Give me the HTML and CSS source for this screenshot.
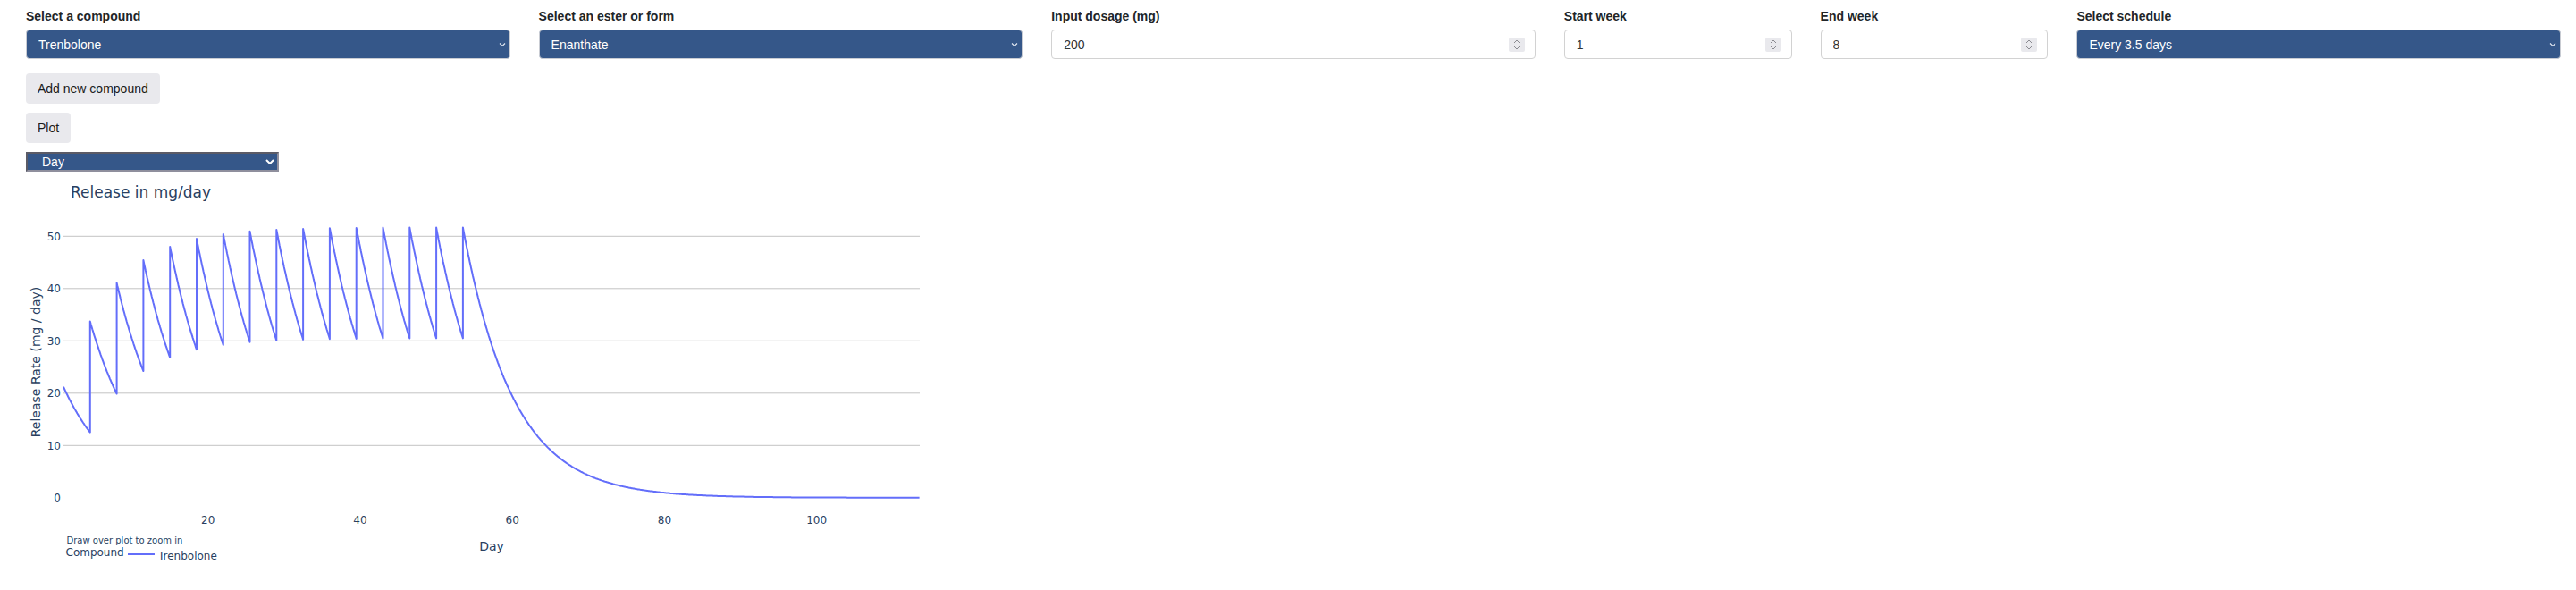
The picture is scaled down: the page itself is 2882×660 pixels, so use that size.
FILE: index.html
```html
<!DOCTYPE html>
<html lang="en">
<head>
  <meta charset="UTF-8">
  <title>Release Calculator</title>
  <link rel="stylesheet" href="styles.css">
</head>
<body>
  <div class="controls">
    <div class="field wide">
      <label for="compound">Select a compound</label>
      <div class="select-wrap">
        <select id="compound" class="dropdown"><option>Trenbolone</option></select>
        <svg class="chevron" width="8" height="5" viewBox="0 0 8 5"><path d="M1 1l3 3 3-3"/></svg>
      </div>
    </div>
    <div class="field wide">
      <label for="ester">Select an ester or form</label>
      <div class="select-wrap">
        <select id="ester" class="dropdown"><option>Enanthate</option></select>
        <svg class="chevron" width="8" height="5" viewBox="0 0 8 5"><path d="M1 1l3 3 3-3"/></svg>
      </div>
    </div>
    <div class="field wide">
      <label for="dosage">Input dosage (mg)</label>
      <div class="input-wrap">
        <input id="dosage" class="number" type="number" value="200">
        <span class="spinner">
          <svg width="8" height="5" viewBox="0 0 8 5"><path d="M1 4l3-3 3 3"/></svg>
          <svg width="8" height="5" viewBox="0 0 8 5"><path d="M1 1l3 3 3-3"/></svg>
        </span>
      </div>
    </div>
    <div class="field">
      <label for="start">Start week</label>
      <div class="input-wrap">
        <input id="start" class="number" type="number" value="1">
        <span class="spinner">
          <svg width="8" height="5" viewBox="0 0 8 5"><path d="M1 4l3-3 3 3"/></svg>
          <svg width="8" height="5" viewBox="0 0 8 5"><path d="M1 1l3 3 3-3"/></svg>
        </span>
      </div>
    </div>
    <div class="field">
      <label for="end">End week</label>
      <div class="input-wrap">
        <input id="end" class="number" type="number" value="8">
        <span class="spinner">
          <svg width="8" height="5" viewBox="0 0 8 5"><path d="M1 4l3-3 3 3"/></svg>
          <svg width="8" height="5" viewBox="0 0 8 5"><path d="M1 1l3 3 3-3"/></svg>
        </span>
      </div>
    </div>
    <div class="field wide">
      <label for="schedule">Select schedule</label>
      <div class="select-wrap">
        <select id="schedule" class="dropdown"><option>Every 3.5 days</option></select>
        <svg class="chevron" width="8" height="5" viewBox="0 0 8 5"><path d="M1 1l3 3 3-3"/></svg>
      </div>
    </div>
  </div>

  <div class="actions">
    <button type="button">Add new compound</button>
    <button type="button">Plot</button>
    <div class="select-wrap unit-wrap">
      <select class="unit"><option>Day</option></select>
      <svg class="chevron bold" width="10" height="6" viewBox="0 0 10 6"><path d="M1 1l4 4 4-4"/></svg>
    </div>
  </div>

  <svg class="chart" width="1100" height="468" viewBox="0 192 1100 468">
    <text class="title" x="79" y="221">Release in mg/day</text>
    <g class="grid">
      <line x1="71" x2="1029" y1="498.3" y2="498.3"/>
      <line x1="71" x2="1029" y1="439.8" y2="439.8"/>
      <line x1="71" x2="1029" y1="381.3" y2="381.3"/>
      <line x1="71" x2="1029" y1="322.8" y2="322.8"/>
      <line x1="71" x2="1029" y1="264.3" y2="264.3"/>
    </g>
    <g class="ytick">
      <text x="68" y="561.2">0</text>
      <text x="68" y="502.7">10</text>
      <text x="68" y="444.2">20</text>
      <text x="68" y="385.7">30</text>
      <text x="68" y="327.2">40</text>
      <text x="68" y="268.7">50</text>
    </g>
    <g class="xtick">
      <text x="232.7" y="586">20</text>
      <text x="402.9" y="586">40</text>
      <text x="573.2" y="586">60</text>
      <text x="743.4" y="586">80</text>
      <text x="913.6" y="586">100</text>
    </g>
    <path id="release" class="trace" d=""/>
    <text class="axis-title" x="550" y="615.5" text-anchor="middle">Day</text>
    <text class="axis-title" transform="translate(45 405) rotate(-90)" text-anchor="middle">Release Rate (mg / day)</text>
    <text class="hint" x="74.5" y="607.5">Draw over plot to zoom in</text>
    <text class="legend" x="73.5" y="622">Compound</text>
    <line class="trace" x1="143" x2="173" y1="620" y2="620"/>
    <text class="legend" x="177" y="625.5">Trenbolone</text>
  </svg>

  <script>
    // depot release: each dose adds A mg/day and decays exponentially
    const A = 21.2;
    const k = Math.log(1 / 0.59) / 3.5;
    const doses = [];
    for (let d = 1; d <= 56; d += 3.5) doses.push(d);

    function rate(t, includeAt) {
      let sum = 0;
      doses.forEach(ti => {
        if (ti < t || (includeAt && ti === t)) sum += A * Math.exp(-k * (t - ti));
      });
      return sum;
    }

    const px = t => 71 + (t - 1) * 8.512;
    const py = v => 556.8 - 5.85 * v;

    const pts = [];
    for (let i = 0; i <= 1125; i++) {
      const t = Math.round((1 + i * 0.1) * 10) / 10;
      if (doses.includes(t) && t > 1) pts.push([px(t), py(rate(t, false))]);
      pts.push([px(t), py(rate(t, true))]);
    }
    document.getElementById("release").setAttribute("d",
      "M" + pts.map(p => p[0].toFixed(1) + "," + p[1].toFixed(1)).join("L"));
  </script>
</body>
</html>
```

FILE: styles.css
```css
body {
  margin: 0;
  font-family: "Liberation Sans", Arial, sans-serif;
  font-size: 14px;
  color: #212529;
  background: #fff;
}

.controls {
  display: grid;
  grid-template-columns: repeat(10, 1fr);
  column-gap: 32px;
  padding: 10px 17px 0 29px;
}

.field {
  min-width: 0;
}

.field.wide {
  grid-column: span 2;
}

label {
  display: block;
  font-weight: bold;
  margin-bottom: 7px;
}

.select-wrap, .input-wrap {
  position: relative;
}

.dropdown, .number {
  display: block;
  width: 100%;
  height: 33px;
  box-sizing: border-box;
  border-radius: 4px;
  font-family: inherit;
  font-size: 14px;
  padding: 0 30px 0 13px;
  margin: 0;
  outline: none;
}

.dropdown {
  appearance: none;
  -webkit-appearance: none;
  background: #355789;
  color: #fff;
  border: 1px solid #c9ccd3;
}

.number {
  background: #fff;
  color: #333;
  border: 1px solid #d2d2d2;
  -moz-appearance: textfield;
}

.number::-webkit-inner-spin-button,
.number::-webkit-outer-spin-button {
  -webkit-appearance: none;
  margin: 0;
}

.chevron {
  position: absolute;
  right: 5px;
  top: 50%;
  transform: translateY(-50%);
  pointer-events: none;
}

.chevron path {
  fill: none;
  stroke: #e6ebf3;
  stroke-width: 1.1;
}

.chevron.bold path {
  stroke: #fff;
  stroke-width: 2;
}

.spinner {
  position: absolute;
  right: 12px;
  top: 50%;
  transform: translateY(-50%);
  width: 18px;
  height: 16px;
  background: #e9e9ed;
  border-radius: 2px;
  display: flex;
  flex-direction: column;
  align-items: center;
  justify-content: center;
  gap: 2px;
}

.spinner svg {
  display: block;
}

.spinner path {
  fill: none;
  stroke: #8a8a90;
  stroke-width: 1;
}

.actions {
  display: flex;
  flex-direction: column;
  align-items: flex-start;
  gap: 10px;
  padding-left: 29px;
  margin-top: 16px;
}

button {
  height: 34px;
  padding: 0 13px;
  border: none;
  border-radius: 4px;
  background: #e9e9ed;
  color: #1b1b1b;
  font-family: inherit;
  font-size: 14px;
  cursor: pointer;
}

button:hover {
  background: #d0d0d7;
}

.unit-wrap {
  width: 283px;
}

.unit {
  appearance: none;
  -webkit-appearance: none;
  display: block;
  width: 100%;
  height: 22px;
  box-sizing: border-box;
  margin: 0;
  padding: 0 20px 0 16px;
  background: #355789;
  color: #fff;
  font-family: inherit;
  font-size: 14px;
  border: 2px solid #8f8f9d;
  border-top-color: #5b5b66;
  border-left-color: #5b5b66;
  border-radius: 0;
  outline: none;
}

.chart {
  display: block;
  font-family: "DejaVu Sans", Verdana, sans-serif;
}

.chart text {
  fill: #2a3f5f;
}

.title {
  font-size: 17px;
}

.grid line {
  stroke: #c4c4c4;
  stroke-width: 1;
}

.ytick text {
  font-size: 12px;
  text-anchor: end;
}

.xtick text {
  font-size: 12px;
  text-anchor: middle;
}

.trace {
  fill: none;
  stroke: #636efa;
  stroke-width: 2;
  stroke-linejoin: round;
}

.axis-title {
  font-size: 14px;
}

.hint {
  font-size: 10px;
}

.legend {
  font-size: 12px;
}
```
